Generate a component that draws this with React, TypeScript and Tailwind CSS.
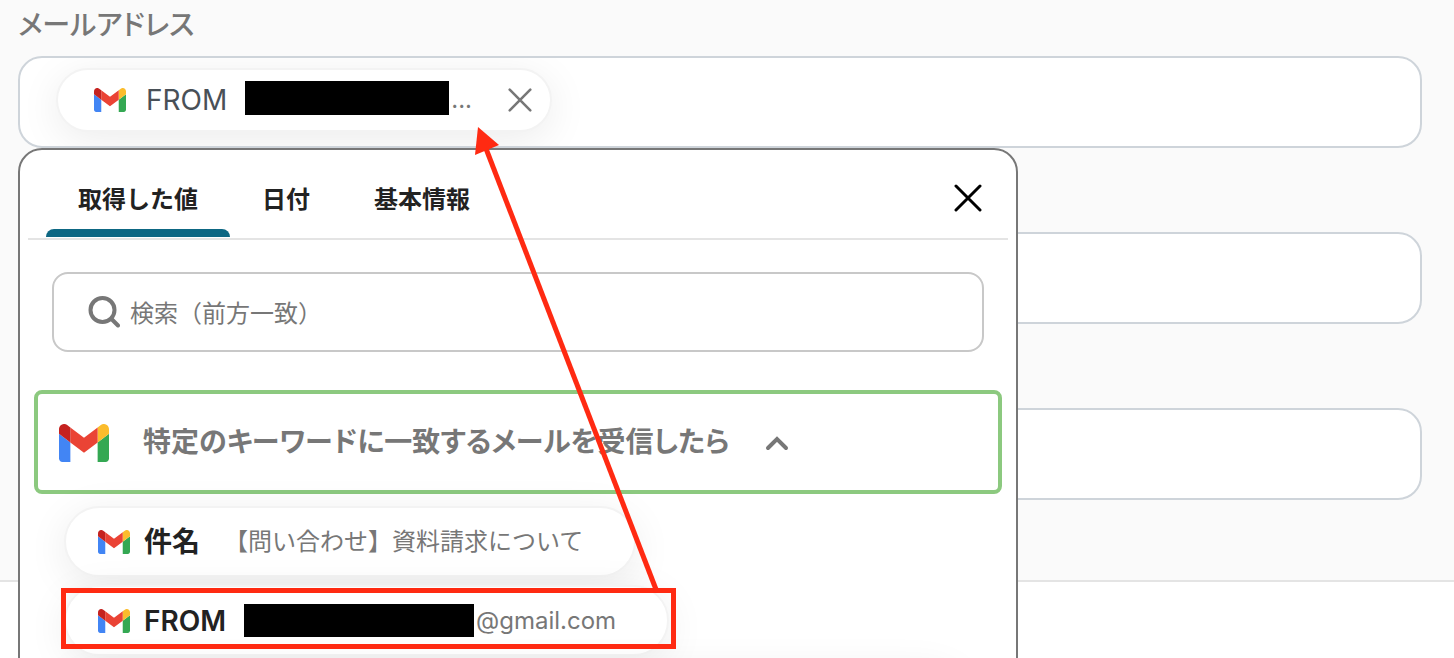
import { useState } from "react"

const tabs = ["取得した値", "日付", "基本情報"]

function GmailIcon({ className }: { className: string }) {
  return (
    <svg viewBox="52 42 88 66" preserveAspectRatio="none" className={className} aria-hidden="true">
      <path fill="#4285f4" d="M58 108h14V74L52 59v43c0 3.32 2.69 6 6 6" />
      <path fill="#34a853" d="M120 108h14c3.32 0 6-2.69 6-6V59l-20 15" />
      <path fill="#fbbc2c" d="M120 48v26l20-15v-8c0-7.42-8.47-11.65-14.4-7.2" />
      <path fill="#ea4335" d="M72 74V48l24 18 24-18v26L96 92" />
      <path fill="#c5221f" d="M52 51v8l20 15V48l-5.6-4.2c-5.94-4.45-14.4-.22-14.4 7.2" />
    </svg>
  )
}

function CloseIcon({ className }: { className: string }) {
  return (
    <svg viewBox="0 0 28 28" className={className} fill="none" stroke="currentColor" strokeLinecap="round" aria-hidden="true">
      <path d="M2 2L26 26M26 2L2 26" />
    </svg>
  )
}

function Arrow() {
  return (
    <svg viewBox="0 0 200 470" className="pointer-events-none absolute left-[470px] top-[124px] z-20 h-[470px] w-[200px]" aria-hidden="true">
      <path d="M15 22L187 468" stroke="#ff2a12" strokeWidth="5" />
      <path d="M8 3L29 21L5 31Z" fill="#ff2a12" />
    </svg>
  )
}

export default function App() {
  const [active, setActive] = useState(0)
  const [open, setOpen] = useState(true)
  const [query, setQuery] = useState("")

  return (
    <div className="relative h-screen overflow-hidden bg-white font-['Inter','Noto_Sans_CJK_JP',sans-serif] text-[#222]" lang="ja">
      <section className="flex flex-col gap-[84px] border-b-2 border-[#e4e4e4] bg-[#fafafa] px-[18px] pt-1 pb-20 pr-8">
        <div className="relative">
          <label htmlFor="mail" className="block h-[52px] pt-px text-[28px] leading-10 font-medium text-[#777] [font-feature-settings:'palt']">
            メールアドレス
          </label>
          <div className="flex h-[92px] items-center overflow-hidden rounded-3xl border-2 border-[#ced4da] bg-white px-9">
            <div className="mb-1 flex h-16 shrink-0 items-center rounded-full border-2 border-[#f3f3f3] bg-white pr-[18px] pl-9 shadow-[0_8px_40px_rgba(0,0,0,0.08)]">
              <GmailIcon className="h-6 w-8" />
              <span className="ml-5 text-[28px] text-[#495057]">FROM</span>
              <span className="mb-1 ml-[18px] h-[34px] w-[204px] bg-black" />
              <span className="ml-0.5 text-2xl text-[#777]">...</span>
              <button type="button" aria-label="削除" className="ml-9 text-[#777]">
                <CloseIcon className="size-6 stroke-3" />
              </button>
            </div>
            <input id="mail" className="h-full min-w-0 flex-1 outline-none" />
          </div>

          {open && (
            <div className="absolute top-[144px] left-0 z-10 h-[640px] w-[1000px] rounded-t-3xl border-2 border-[#777] bg-white px-2">
              <div className="flex items-start justify-between border-b-2 border-[#e4e4e4] pr-[26px] pl-[18px]">
                <div role="tablist" className="flex">
                  {tabs.map((tab, i) => (
                    <button
                      key={tab}
                      type="button"
                      role="tab"
                      aria-selected={i === active}
                      onClick={() => setActive(i)}
                      className="flex h-[88px] flex-col pt-[34px] pb-px text-2xl leading-8 font-bold"
                    >
                      <span className="px-8">{tab}</span>
                      <span className={i === active ? "mt-auto h-2 w-full rounded-t-lg bg-[#0d6783]" : "mt-auto h-2 w-full"} />
                    </button>
                  ))}
                </div>
                <button type="button" aria-label="閉じる" onClick={() => setOpen(false)} className="mt-[34px] text-black">
                  <CloseIcon className="size-7 stroke-3" />
                </button>
              </div>

              <div className="mx-6 mt-8 flex h-20 items-center rounded-2xl border-2 border-[#c8c8c8] pl-[34px]">
                <svg viewBox="0 0 32 32" className="size-8" fill="none" stroke="#777" strokeWidth="4" strokeLinecap="round" aria-hidden="true">
                  <circle cx="14.5" cy="14" r="12" />
                  <path d="M23.5 23L30 29.5" />
                </svg>
                <input
                  aria-label="検索"
                  value={query}
                  onChange={(e) => setQuery(e.target.value)}
                  placeholder="検索（前方一致）"
                  className="ml-2.5 h-full flex-1 pt-0.5 text-2xl outline-none placeholder:text-[#777]"
                />
              </div>

              <button type="button" className="mx-1.5 mt-[38px] flex h-[104px] w-[968px] items-center rounded-lg border-4 border-[#8cc97f] pl-[21px] text-[#777]">
                <GmailIcon className="mt-0.5 h-[38px] w-[50px]" />
                <span className="ml-[34px] text-[28px] font-bold [font-feature-settings:'palt']">
                  特定のキーワードに一致するメールを受信したら
                </span>
                <svg viewBox="0 0 24 16" className="mt-0.5 ml-9 h-4 w-6" fill="none" stroke="currentColor" strokeWidth="4" strokeLinecap="round" aria-hidden="true">
                  <path d="M3 13L12 4L21 13" />
                </svg>
              </button>

              <div className="mt-3 ml-9 flex flex-col items-start gap-2">
                <button type="button" className="flex h-[71px] items-center rounded-full border-2 border-[#f3f3f3] bg-white pr-[51px] pl-8 shadow-[0_8px_40px_rgba(0,0,0,0.08)]">
                  <GmailIcon className="h-6 w-8" />
                  <span className="ml-3.5 text-[28px] font-bold">件名</span>
                  <span className="ml-6 text-2xl text-[#777]">【問い合わせ】資料請求について</span>
                </button>
                <button type="button" className="flex h-[71px] items-center rounded-full border-2 border-[#f3f3f3] bg-white pr-[51px] pl-8 shadow-[0_8px_40px_rgba(0,0,0,0.08)]">
                  <GmailIcon className="h-6 w-8" />
                  <span className="ml-3.5 text-[28px] font-semibold">FROM</span>
                  <span className="ml-[18px] h-[33px] w-[230px] bg-black" />
                  <span className="ml-0.5 text-2xl text-[#777]">@gmail.com</span>
                </button>
                <div className="h-[71px] w-[900px] rounded-full border-2 border-[#f3f3f3] bg-white shadow-[0_8px_40px_rgba(0,0,0,0.08)]" />
              </div>
            </div>
          )}
        </div>
        <input aria-label="項目2" className="h-[92px] rounded-3xl border-2 border-[#ced4da] bg-white px-9" />
        <input aria-label="項目3" className="h-[92px] rounded-3xl border-2 border-[#ced4da] bg-white px-9" />
      </section>

      <div className="pointer-events-none absolute top-[588px] left-[61px] z-20 h-[61px] w-[615px] border-5 border-[#ff2a12]" />
      <Arrow />
    </div>
  )
}
